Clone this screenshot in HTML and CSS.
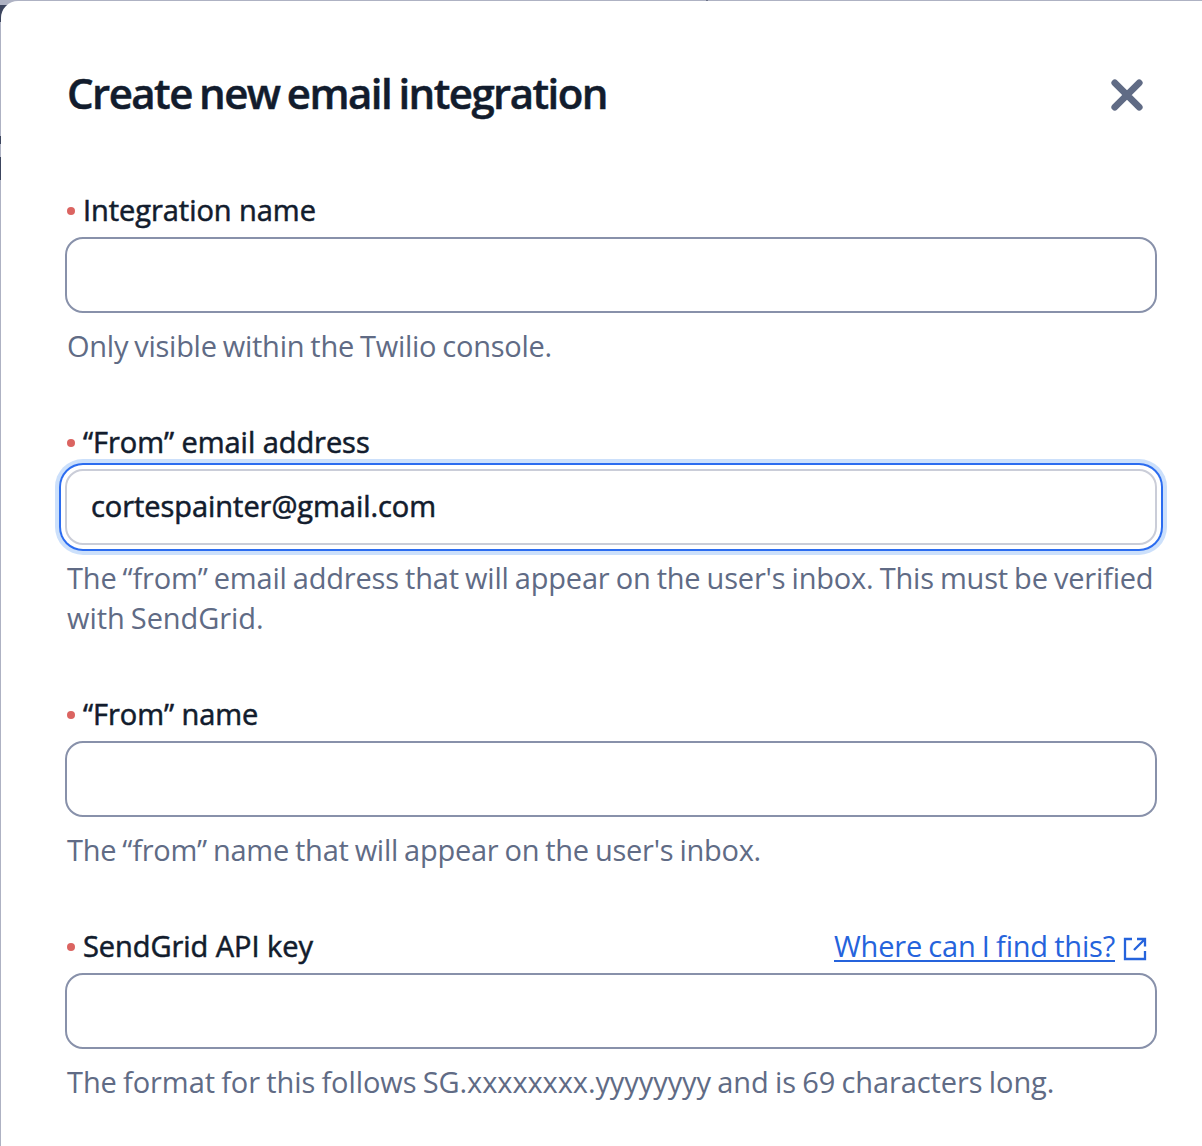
FILE: index.html
```html
<!DOCTYPE html>
<html lang="en">
<head>
<meta charset="utf-8">
<title>Create new email integration</title>
<link rel="stylesheet" href="styles.css">
</head>
<body>
<div class="backdrop">
<main class="modal">
  <header class="modal-header">
    <h1 class="title">Create new email integration</h1>
    <button class="close" aria-label="Close"><svg width="34" height="34" viewBox="0 0 34 34" fill="none" stroke="#606b85" stroke-width="6.8" stroke-linecap="round"><path d="M4.8 4.8l24.4 24.4M29.2 4.8l-24.4 24.4"/></svg></button>
  </header>
  <form class="form">
    <section class="field">
      <div class="label-row"><label class="label" for="integration"><i class="dot"></i>Integration name</label></div>
      <input class="input" id="integration" type="text">
      <p class="help help-tight">Only visible within the Twilio console.</p>
    </section>
    <section class="field">
      <div class="label-row"><label class="label" for="email"><i class="dot"></i>“From” email address</label></div>
      <input class="input input-focus" id="email" type="text" value="cortespainter@gmail.com">
      <p class="help">The “from” email address that will appear on the user's inbox. This must be verified<br><span class="loose">with SendGrid.</span></p>
    </section>
    <section class="field">
      <div class="label-row"><label class="label" for="name"><i class="dot"></i>“From” name</label></div>
      <input class="input" id="name" type="text">
      <p class="help help-tight">The “from” name that will appear on the user's inbox.</p>
    </section>
    <section class="field">
      <div class="label-row"><label class="label" for="key"><i class="dot"></i>SendGrid API key</label>
        <a class="link" href="#"><span class="link-text">Where can I find this?</span><svg width="24" height="24" viewBox="0 0 24 24" fill="none" stroke="#2563dc" stroke-width="2.3"><path d="M9 2H2v20h20v-8M14 2h8v7.5M22 2L11 13"/></svg></a>
      </div>
      <input class="input" id="key" type="text">
      <p class="help"><span class="loose">The format for this follows SG.xxxxxxxx.yyyyyyyy and is 69 characters long.</span></p>
    </section>
  </form>
</main>
</div>
</body>
</html>
```

FILE: styles.css
```css
* { box-sizing: border-box; }
body { margin: 0; font-family: "Open Sans", sans-serif; color: #121c2d; }
.backdrop {
  height: 1146px;
  padding: 1px 0 0 1px;
  overflow: hidden;
  background:
    linear-gradient(#3c455e, #3c455e) 0 5px / 8px 17px no-repeat,
    linear-gradient(#3c455e, #3c455e) 0 136px / 1px 8px no-repeat,
    linear-gradient(#3c455e, #3c455e) 0 157px / 1px 23px no-repeat,
    linear-gradient(#6d7389, #6d7389) 706px 0 / 2px 1px no-repeat,
    #aeb2c3;
}
.modal { height: 1145px; padding: 64px 45px 0 64px; background: #fff; border-top-left-radius: 17px; }
.modal-header { display: flex; align-items: center; justify-content: space-between; height: 60px; padding: 0 13px 0 2px; }
.title { margin: 0; padding-bottom: 4px; font-size: 42px; line-height: 56px; font-weight: 600; letter-spacing: -1.55px; word-spacing: -2.1px; white-space: nowrap; -webkit-text-stroke: 0.5px currentColor; }
.close { display: flex; padding: 0; border: 0; background: none; }
.form { display: flex; flex-direction: column; gap: 56px; margin-top: 65px; }
.field { display: flex; flex-direction: column; }
.label-row { display: flex; justify-content: space-between; height: 40px; margin-bottom: 7px; padding: 0 10px 0 2px; font-size: 29px; line-height: 40px; white-space: nowrap; }
.label { display: flex; align-items: center; gap: 8px; letter-spacing: -0.05px; -webkit-text-stroke: 0.55px currentColor; }
.dot { width: 8px; height: 8px; margin-top: 2px; border-radius: 50%; background: #db6461; }
.input { width: 100%; height: 76px; padding: 0 24px 4px; border: 2px solid #8891aa; border-radius: 18px; outline: 0; background: #fff; color: #121c2d; font: 400 29px "Open Sans", sans-serif; letter-spacing: -0.05px; -webkit-text-stroke: 0.55px currentColor; }
.input-focus { border-color: #cacdd8; box-shadow: 0 0 0 4px #fff, 0 0 0 6px #2b6cf0, 0 0 0 10px #cce0fb; }
.help { margin: 13px 0 0; padding-left: 2px; font-size: 29px; line-height: 40px; letter-spacing: -0.19px; word-spacing: -1.2px; color: #606b85; white-space: nowrap; }
.help-tight { letter-spacing: -0.26px; }
.loose { letter-spacing: -0.08px; }
.link { display: flex; align-items: center; gap: 8px; letter-spacing: -0.2px; word-spacing: -1px; color: #2563dc; text-decoration: none; }
.link svg { margin-top: 6px; }
.link-text { text-decoration: underline; text-decoration-thickness: 2px; text-underline-offset: 3px; }
```
